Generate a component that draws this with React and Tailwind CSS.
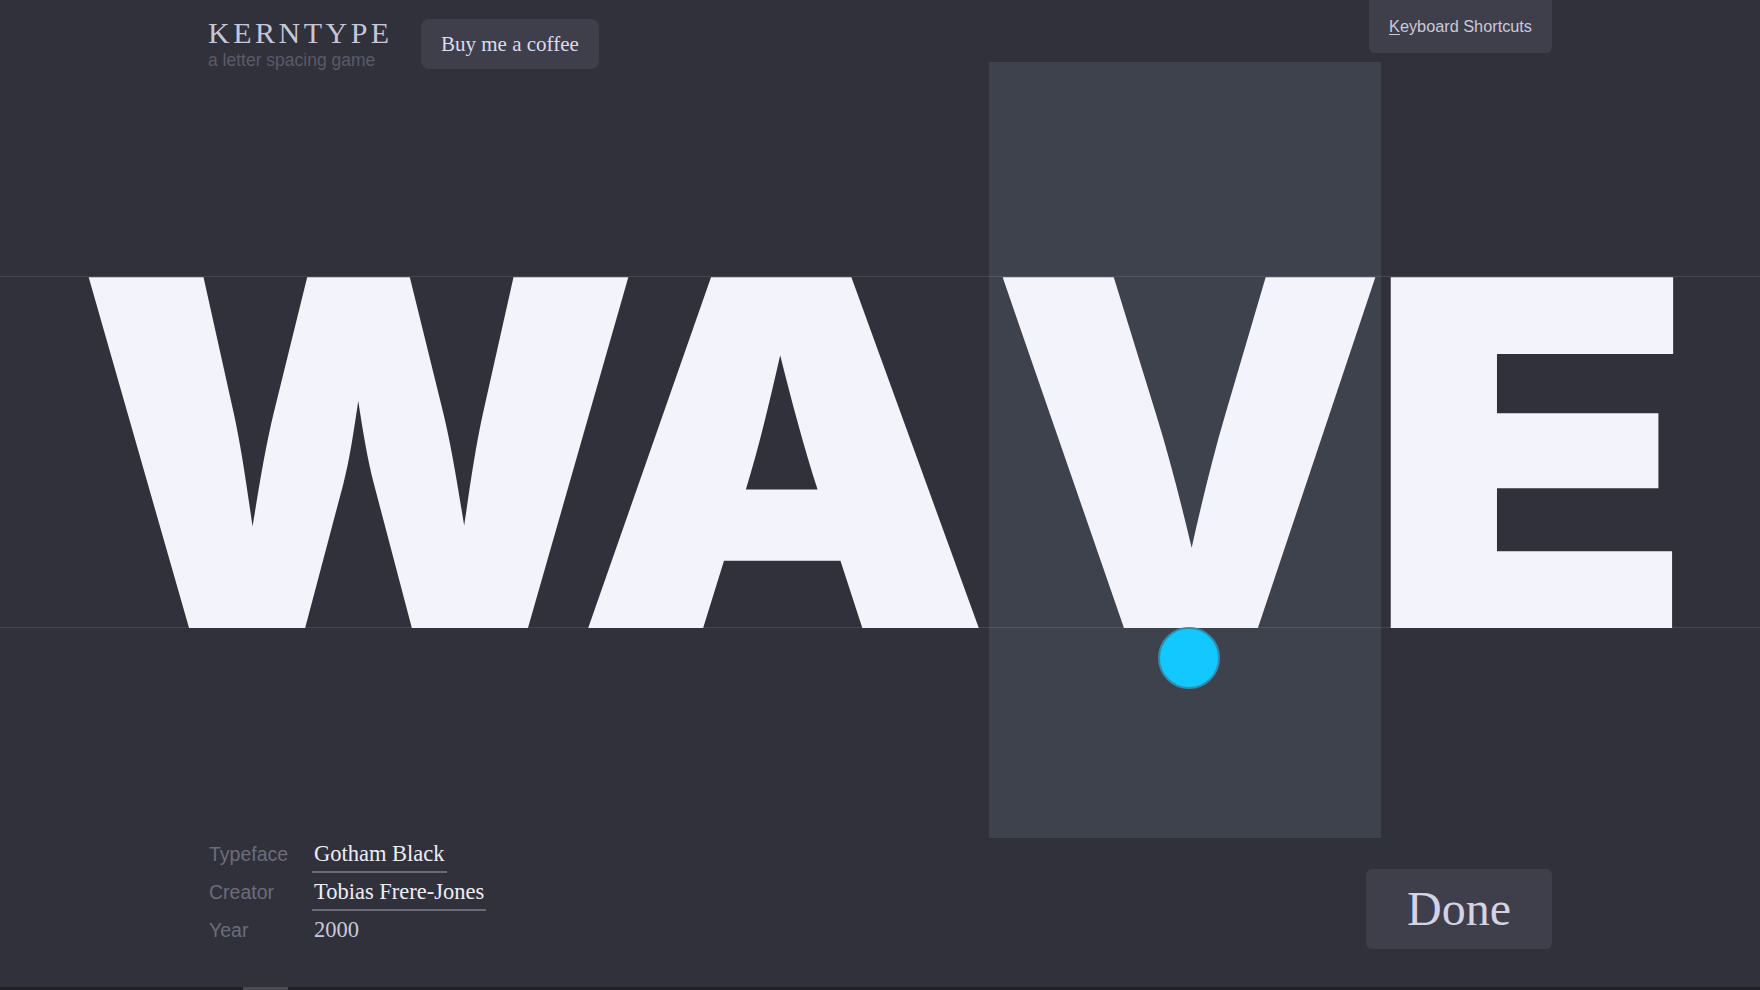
export default function App() {
  const serif = { fontFamily: '"Liberation Serif", "Times New Roman", serif' };
  return (
    <div
      className="relative flex h-[990px] w-full flex-col overflow-hidden bg-[#31313b]"
      style={{ fontFamily: '"Liberation Sans", Arial, sans-serif' }}
    >
      {/* game stage */}
      <div className="absolute inset-0">
        <div className="absolute left-[989px] top-[62px] h-[776px] w-[392px] bg-[#3e424d]" />
        <div className="absolute left-0 right-0 top-[276px] h-px bg-white/10" />
        <div className="absolute left-0 right-0 top-[627px] h-px bg-white/10" />
        <svg className="absolute left-0 top-0" width="1760" height="990" viewBox="0 0 1760 990">
          <g fill="#f3f3fc" fontFamily="Inter, 'Liberation Sans', sans-serif" fontWeight="900" fontSize="482">
            <text x="77" y="628" textLength="563" lengthAdjust="spacingAndGlyphs">W</text>
            <text x="576.5" y="628" textLength="414" lengthAdjust="spacingAndGlyphs">A</text>
            <text x="991.5" y="628" textLength="395" lengthAdjust="spacingAndGlyphs">V</text>
            <text x="1365.5" y="628" textLength="330" lengthAdjust="spacingAndGlyphs">E</text>
          </g>
        </svg>
        <div className="absolute left-[1158px] top-[627px] h-[62px] w-[62px] rounded-full border-2 border-[#2f8db0] bg-[#12c8ff]" />
      </div>

      {/* header */}
      <header className="relative mx-auto flex w-[1344px] items-start justify-between">
        <div className="flex items-start">
          <div className="mt-[18px] w-[213px]">
            <div className="text-[30px] leading-[30px] tracking-[3.5px] text-[#c6c6da]" style={serif}>
              KERNTYPE
            </div>
            <div className="mt-[2px] text-[17.5px] leading-[20px] text-[#5a5a6a]">a letter spacing game</div>
          </div>
          <button
            className="mt-[19px] h-[50px] rounded-lg bg-[#3f3f4b] px-[20px] pt-[2px] text-[21px] text-[#dcdcec]"
            style={serif}
          >
            Buy me a coffee
          </button>
        </div>
        <button className="flex h-[53px] w-[183px] items-center rounded-b-md bg-[#3f3f4b] pl-[20px] text-[16.3px] text-[#c9c9db]">
          <span className="underline underline-offset-2">K</span>eyboard Shortcuts
        </button>
      </header>

      <div className="flex-1" />

      {/* footer */}
      <footer className="relative mx-auto flex w-[1344px] items-end justify-between pb-[41px]">
        <div className="flex flex-col">
          {[
            ['Typeface', 'Gotham Black', true],
            ['Creator', 'Tobias Frere-Jones', true],
            ['Year', '2000', false],
          ].map(([label, value, link]) => (
            <div key={label} className="flex h-[38px] items-baseline pt-[8px]">
              <span className="w-[104px] pl-[1px] text-[19.5px] leading-[20px] text-[#6c6c7c]">{label}</span>
              <span
                className={
                  link
                    ? 'border-b-2 border-[#6a6a78] px-[2px] pb-[6px] text-[22.5px] leading-[22px] text-[#eeeef8]'
                    : 'px-[2px] text-[22.5px] leading-[22px] text-[#c9c9d9]'
                }
                style={serif}
              >
                {value}
              </span>
            </div>
          ))}
        </div>
        <button
          className="flex h-[80px] w-[186px] items-center justify-center rounded-md bg-[#3f3f4b] text-[48px] text-[#d3d3e3]"
          style={serif}
        >
          Done
        </button>
      </footer>

      {/* bottom indicator */}
      <div className="absolute bottom-0 left-0 right-0 h-[3px] bg-[#222226]">
        <div className="absolute left-[243px] top-0 h-full w-[45px] bg-[#4a4a50]" />
      </div>
    </div>
  );
}
